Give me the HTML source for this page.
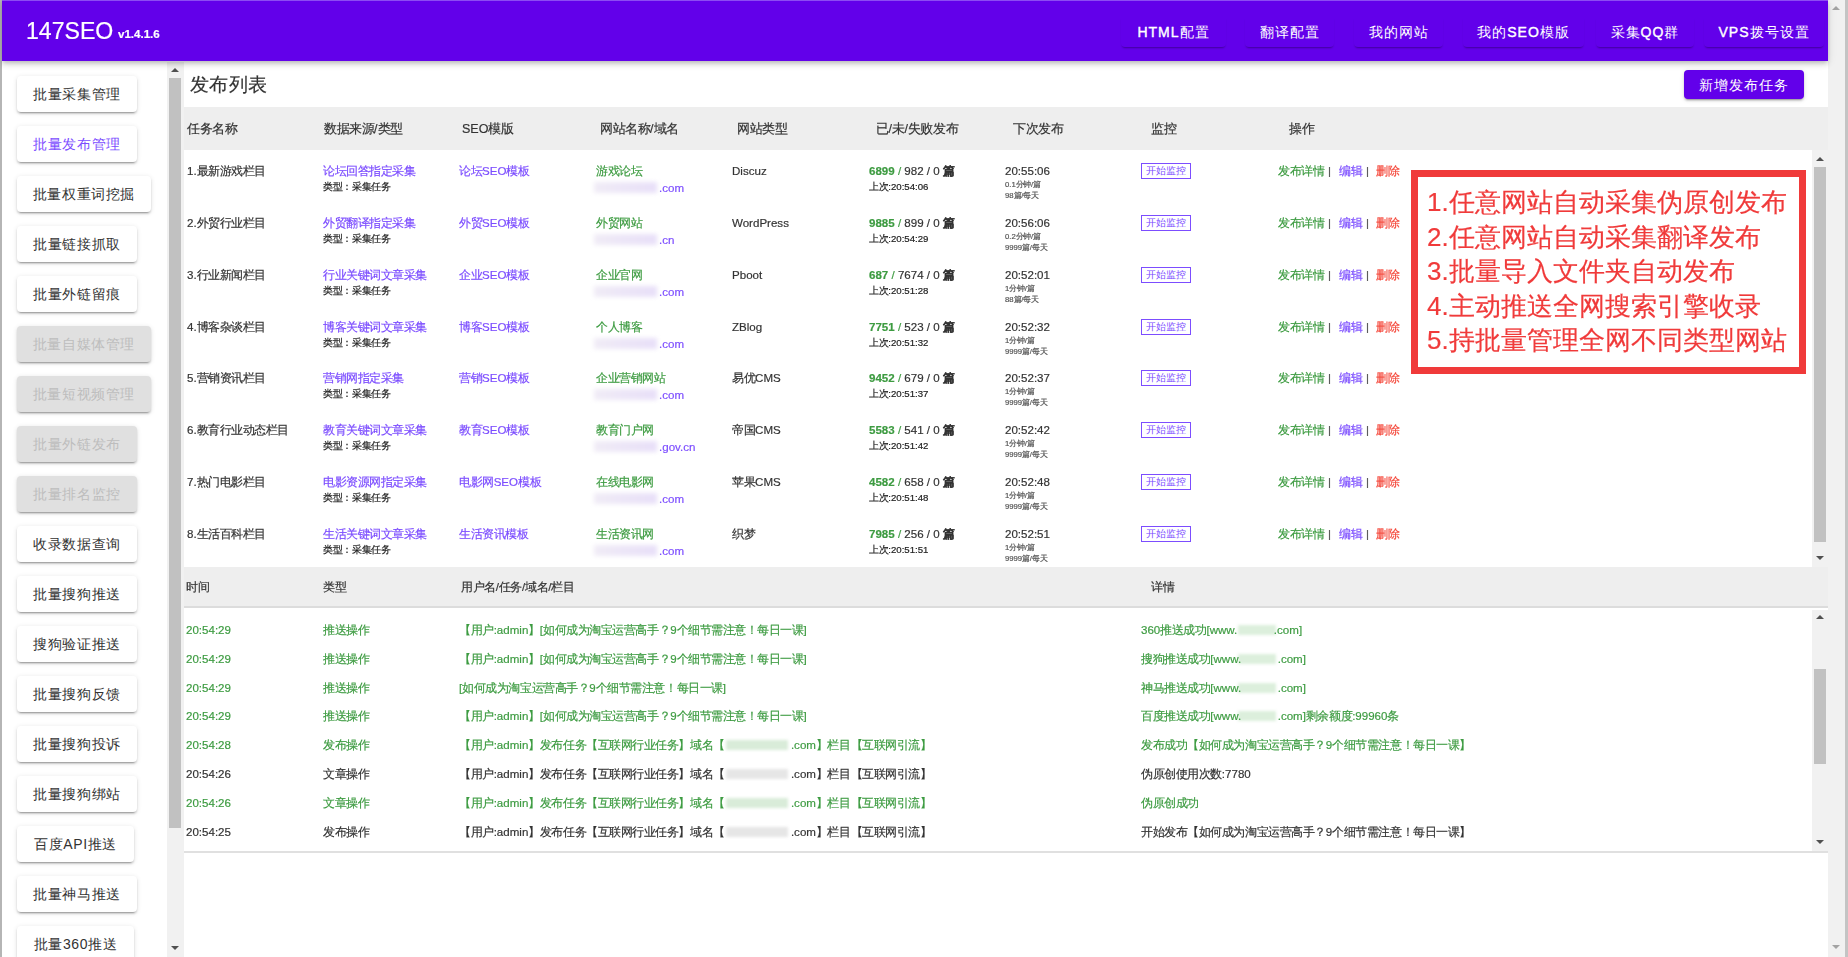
<!DOCTYPE html><html><head><meta charset="utf-8"><title>147SEO</title><style>
*{box-sizing:border-box;margin:0;padding:0}
html,body{width:1848px;height:957px;overflow:hidden;background:#fff;font-family:"Liberation Sans",sans-serif;color:#333}
.abs{position:absolute}
.t{position:absolute;white-space:nowrap;line-height:1;transform:scale(.9625);transform-origin:0 0;-webkit-text-stroke:0.2px currentColor}
.hdr{position:absolute;left:2px;top:0;width:1826px;height:61px;background:#6200ea;box-shadow:0 2px 4px -1px rgba(0,0,0,.16),0 4px 5px 0 rgba(0,0,0,.11),0 1px 10px 0 rgba(0,0,0,.09);z-index:5}
.nb b{font-weight:normal;-webkit-text-stroke:0.4px #fff}
.nb{position:absolute;top:16px;height:31px;border-radius:4px;box-shadow:0 2px 2px -1px rgba(0,0,0,.35);color:#fff;font-size:14px;font-weight:500;letter-spacing:1px;text-align:center;line-height:32px}
.sb{position:absolute;left:17px;height:36px;width:120px;background:#fff;border-radius:4px;box-shadow:0 3px 1px -2px rgba(0,0,0,.2),0 2px 2px 0 rgba(0,0,0,.14),0 1px 5px 0 rgba(0,0,0,.12);font-size:14px;color:#333;text-align:center;line-height:36px;letter-spacing:0.6px;font-weight:500}
.sb.dis{background:#e0e0e0;color:#bdbdbd;box-shadow:0 3px 1px -2px rgba(0,0,0,.2),0 2px 2px 0 rgba(0,0,0,.14),0 1px 5px 0 rgba(0,0,0,.12)}
.track{position:absolute;background:#f1f1f1}
.thumb{position:absolute;background:#c1c1c1}
.aru{position:absolute;width:0;height:0;border-left:4px solid transparent;border-right:4px solid transparent;border-bottom:4px solid #505050}
.ard{position:absolute;width:0;height:0;border-left:4px solid transparent;border-right:4px solid transparent;border-top:4px solid #505050}
.c12{font-size:12px}
.lk{color:#7c4dff}
.gr{color:#3d9b41}
.rd{color:#f44336}
.blur{position:absolute;height:11px;background:linear-gradient(90deg,#f0ecf6,#e8dff8);filter:blur(2px)}
.gblur{position:absolute;height:12px;background:#e2f0e2;filter:blur(2px)}
</style></head><body>
<div class="abs" style="left:0;top:0;width:2px;height:957px;background:#b5b5b5"></div>
<div class="track" style="left:1828px;top:0;width:17px;height:957px"></div>
<div class="abs" style="left:1845px;top:0;width:3px;height:957px;background:#c4c4c4"></div>
<div class="aru" style="left:1832px;top:6px;border-bottom-color:#a3a3a3"></div>
<div class="ard" style="left:1832px;top:945px;border-top-color:#a3a3a3"></div>
<div class="hdr">
<div class="abs" style="left:0;top:0;width:1826px;height:1px;background:#8c4cf2"></div>
<div class="t" style="left:24px;top:20px;font-size:24px;color:#fff">147SEO</div>
<div class="t" style="left:116px;top:28px;font-size:12px;font-weight:bold;color:#fff">v1.4.1.6</div>
<div class="nb" style="left:1119px;width:105px"><b>HTML</b>配置</div>
<div class="nb" style="left:1243px;width:89px">翻译配置</div>
<div class="nb" style="left:1352px;width:89px">我的网站</div>
<div class="nb" style="left:1461px;width:121px">我的<b>SEO</b>模版</div>
<div class="nb" style="left:1594px;width:98px">采集<b>QQ</b>群</div>
<div class="nb" style="left:1702px;width:120px"><b>VPS</b>拨号设置</div>
</div>
<div class="sb" style="top:76px;width:120px">批量采集管理</div>
<div class="sb" style="top:126px;width:120px;color:#7c4dff">批量发布管理</div>
<div class="sb" style="top:176px;width:134px">批量权重词挖掘</div>
<div class="sb" style="top:226px;width:120px">批量链接抓取</div>
<div class="sb" style="top:276px;width:120px">批量外链留痕</div>
<div class="sb dis" style="top:326px;width:134px">批量自媒体管理</div>
<div class="sb dis" style="top:376px;width:134px">批量短视频管理</div>
<div class="sb dis" style="top:426px;width:120px">批量外链发布</div>
<div class="sb dis" style="top:476px;width:120px">批量排名监控</div>
<div class="sb" style="top:526px;width:120px">收录数据查询</div>
<div class="sb" style="top:576px;width:120px">批量搜狗推送</div>
<div class="sb" style="top:626px;width:120px">搜狗验证推送</div>
<div class="sb" style="top:676px;width:120px">批量搜狗反馈</div>
<div class="sb" style="top:726px;width:120px">批量搜狗投诉</div>
<div class="sb" style="top:776px;width:120px">批量搜狗绑站</div>
<div class="sb" style="top:826px;width:117px">百度API推送</div>
<div class="sb" style="top:876px;width:120px">批量神马推送</div>
<div class="sb" style="top:926px;width:117px">批量360推送</div>
<div class="track" style="left:167px;top:62px;width:17px;height:895px"></div>
<div class="thumb" style="left:169px;top:78px;width:12px;height:750px"></div>
<div class="aru" style="left:171px;top:68px"></div>
<div class="ard" style="left:171px;top:946px"></div>
<div class="t" style="left:190px;top:75px;font-size:20px;color:#333">发布列表</div>
<div class="abs" style="left:1684px;top:70px;width:120px;height:29px;background:#6200ea;border-radius:4px;box-shadow:0 3px 1px -2px rgba(0,0,0,.2),0 2px 2px 0 rgba(0,0,0,.14),0 1px 5px 0 rgba(0,0,0,.12);color:#fff;font-size:14px;font-weight:500;text-align:center;line-height:31px;letter-spacing:1px">新增发布任务</div>
<div class="abs" style="left:184px;top:107px;width:1644px;height:43px;background:#eeeeee"></div>
<div class="t" style="left:187px;top:122px;font-size:13px;color:#333">任务名称</div>
<div class="t" style="left:324px;top:122px;font-size:13px;color:#333">数据来源/类型</div>
<div class="t" style="left:462px;top:122px;font-size:13px;color:#333">SEO模版</div>
<div class="t" style="left:600px;top:122px;font-size:13px;color:#333">网站名称/域名</div>
<div class="t" style="left:737px;top:122px;font-size:13px;color:#333">网站类型</div>
<div class="t" style="left:876px;top:122px;font-size:13px;color:#333">已/未/失败发布</div>
<div class="t" style="left:1013px;top:122px;font-size:13px;color:#333">下次发布</div>
<div class="t" style="left:1151px;top:122px;font-size:13px;color:#333">监控</div>
<div class="t" style="left:1289px;top:122px;font-size:13px;color:#333">操作</div>
<div class="t c12" style="left:187px;top:165px">1.最新游戏栏目</div>
<div class="t c12 lk" style="left:323px;top:165px">论坛回答指定采集</div>
<div class="t" style="left:323px;top:182px;font-size:10px;color:#222">类型：采集任务</div>
<div class="t c12 lk" style="left:459px;top:165px">论坛SEO模板</div>
<div class="t c12 gr" style="left:596px;top:165px">游戏论坛</div>
<div class="blur" style="left:594px;top:182px;width:63px"></div>
<div class="t c12 lk" style="left:659px;top:182px">.com</div>
<div class="t c12" style="left:732px;top:165px">Discuz</div>
<div class="t c12" style="left:869px;top:165px"><b class="gr">6899</b><span class="gr"> /</span> 982 / 0 <b>篇</b></div>
<div class="t" style="left:869px;top:182px;font-size:10px;color:#222">上次:20:54:06</div>
<div class="t c12" style="left:1005px;top:165px">20:55:06</div>
<div class="t" style="left:1005px;top:181px;font-size:8px;color:#555">0.1分钟/篇</div>
<div class="t" style="left:1005px;top:192px;font-size:8px;color:#555">98篇/每天</div>
<div class="abs" style="left:1141px;top:163px;width:50px;height:16px;border:1px solid #7c4dff;font-size:10px;color:#7c4dff;text-align:center;line-height:14px">开始监控</div>
<div class="t c12 gr" style="left:1278px;top:165px">发布详情</div>
<div class="t c12" style="left:1328px;top:165px;color:#555">|</div>
<div class="t c12 lk" style="left:1338.5px;top:165px">编辑</div>
<div class="t c12" style="left:1365.5px;top:165px;color:#555">|</div>
<div class="t c12 rd" style="left:1375.5px;top:165px">删除</div>
<div class="t c12" style="left:187px;top:217px">2.外贸行业栏目</div>
<div class="t c12 lk" style="left:323px;top:217px">外贸翻译指定采集</div>
<div class="t" style="left:323px;top:234px;font-size:10px;color:#222">类型：采集任务</div>
<div class="t c12 lk" style="left:459px;top:217px">外贸SEO模板</div>
<div class="t c12 gr" style="left:596px;top:217px">外贸网站</div>
<div class="blur" style="left:594px;top:234px;width:63px"></div>
<div class="t c12 lk" style="left:659px;top:234px">.cn</div>
<div class="t c12" style="left:732px;top:217px">WordPress</div>
<div class="t c12" style="left:869px;top:217px"><b class="gr">9885</b><span class="gr"> /</span> 899 / 0 <b>篇</b></div>
<div class="t" style="left:869px;top:234px;font-size:10px;color:#222">上次:20:54:29</div>
<div class="t c12" style="left:1005px;top:217px">20:56:06</div>
<div class="t" style="left:1005px;top:233px;font-size:8px;color:#555">0.2分钟/篇</div>
<div class="t" style="left:1005px;top:244px;font-size:8px;color:#555">9999篇/每天</div>
<div class="abs" style="left:1141px;top:215px;width:50px;height:16px;border:1px solid #7c4dff;font-size:10px;color:#7c4dff;text-align:center;line-height:14px">开始监控</div>
<div class="t c12 gr" style="left:1278px;top:217px">发布详情</div>
<div class="t c12" style="left:1328px;top:217px;color:#555">|</div>
<div class="t c12 lk" style="left:1338.5px;top:217px">编辑</div>
<div class="t c12" style="left:1365.5px;top:217px;color:#555">|</div>
<div class="t c12 rd" style="left:1375.5px;top:217px">删除</div>
<div class="t c12" style="left:187px;top:269px">3.行业新闻栏目</div>
<div class="t c12 lk" style="left:323px;top:269px">行业关键词文章采集</div>
<div class="t" style="left:323px;top:286px;font-size:10px;color:#222">类型：采集任务</div>
<div class="t c12 lk" style="left:459px;top:269px">企业SEO模板</div>
<div class="t c12 gr" style="left:596px;top:269px">企业官网</div>
<div class="blur" style="left:594px;top:286px;width:63px"></div>
<div class="t c12 lk" style="left:659px;top:286px">.com</div>
<div class="t c12" style="left:732px;top:269px">Pboot</div>
<div class="t c12" style="left:869px;top:269px"><b class="gr">687</b><span class="gr"> /</span> 7674 / 0 <b>篇</b></div>
<div class="t" style="left:869px;top:286px;font-size:10px;color:#222">上次:20:51:28</div>
<div class="t c12" style="left:1005px;top:269px">20:52:01</div>
<div class="t" style="left:1005px;top:285px;font-size:8px;color:#555">1分钟/篇</div>
<div class="t" style="left:1005px;top:296px;font-size:8px;color:#555">88篇/每天</div>
<div class="abs" style="left:1141px;top:267px;width:50px;height:16px;border:1px solid #7c4dff;font-size:10px;color:#7c4dff;text-align:center;line-height:14px">开始监控</div>
<div class="t c12 gr" style="left:1278px;top:269px">发布详情</div>
<div class="t c12" style="left:1328px;top:269px;color:#555">|</div>
<div class="t c12 lk" style="left:1338.5px;top:269px">编辑</div>
<div class="t c12" style="left:1365.5px;top:269px;color:#555">|</div>
<div class="t c12 rd" style="left:1375.5px;top:269px">删除</div>
<div class="t c12" style="left:187px;top:321px">4.博客杂谈栏目</div>
<div class="t c12 lk" style="left:323px;top:321px">博客关键词文章采集</div>
<div class="t" style="left:323px;top:338px;font-size:10px;color:#222">类型：采集任务</div>
<div class="t c12 lk" style="left:459px;top:321px">博客SEO模板</div>
<div class="t c12 gr" style="left:596px;top:321px">个人博客</div>
<div class="blur" style="left:594px;top:338px;width:63px"></div>
<div class="t c12 lk" style="left:659px;top:338px">.com</div>
<div class="t c12" style="left:732px;top:321px">ZBlog</div>
<div class="t c12" style="left:869px;top:321px"><b class="gr">7751</b><span class="gr"> /</span> 523 / 0 <b>篇</b></div>
<div class="t" style="left:869px;top:338px;font-size:10px;color:#222">上次:20:51:32</div>
<div class="t c12" style="left:1005px;top:321px">20:52:32</div>
<div class="t" style="left:1005px;top:337px;font-size:8px;color:#555">1分钟/篇</div>
<div class="t" style="left:1005px;top:348px;font-size:8px;color:#555">9999篇/每天</div>
<div class="abs" style="left:1141px;top:319px;width:50px;height:16px;border:1px solid #7c4dff;font-size:10px;color:#7c4dff;text-align:center;line-height:14px">开始监控</div>
<div class="t c12 gr" style="left:1278px;top:321px">发布详情</div>
<div class="t c12" style="left:1328px;top:321px;color:#555">|</div>
<div class="t c12 lk" style="left:1338.5px;top:321px">编辑</div>
<div class="t c12" style="left:1365.5px;top:321px;color:#555">|</div>
<div class="t c12 rd" style="left:1375.5px;top:321px">删除</div>
<div class="t c12" style="left:187px;top:372px">5.营销资讯栏目</div>
<div class="t c12 lk" style="left:323px;top:372px">营销网指定采集</div>
<div class="t" style="left:323px;top:389px;font-size:10px;color:#222">类型：采集任务</div>
<div class="t c12 lk" style="left:459px;top:372px">营销SEO模板</div>
<div class="t c12 gr" style="left:596px;top:372px">企业营销网站</div>
<div class="blur" style="left:594px;top:389px;width:63px"></div>
<div class="t c12 lk" style="left:659px;top:389px">.com</div>
<div class="t c12" style="left:732px;top:372px">易优CMS</div>
<div class="t c12" style="left:869px;top:372px"><b class="gr">9452</b><span class="gr"> /</span> 679 / 0 <b>篇</b></div>
<div class="t" style="left:869px;top:389px;font-size:10px;color:#222">上次:20:51:37</div>
<div class="t c12" style="left:1005px;top:372px">20:52:37</div>
<div class="t" style="left:1005px;top:388px;font-size:8px;color:#555">1分钟/篇</div>
<div class="t" style="left:1005px;top:399px;font-size:8px;color:#555">9999篇/每天</div>
<div class="abs" style="left:1141px;top:370px;width:50px;height:16px;border:1px solid #7c4dff;font-size:10px;color:#7c4dff;text-align:center;line-height:14px">开始监控</div>
<div class="t c12 gr" style="left:1278px;top:372px">发布详情</div>
<div class="t c12" style="left:1328px;top:372px;color:#555">|</div>
<div class="t c12 lk" style="left:1338.5px;top:372px">编辑</div>
<div class="t c12" style="left:1365.5px;top:372px;color:#555">|</div>
<div class="t c12 rd" style="left:1375.5px;top:372px">删除</div>
<div class="t c12" style="left:187px;top:424px">6.教育行业动态栏目</div>
<div class="t c12 lk" style="left:323px;top:424px">教育关键词文章采集</div>
<div class="t" style="left:323px;top:441px;font-size:10px;color:#222">类型：采集任务</div>
<div class="t c12 lk" style="left:459px;top:424px">教育SEO模板</div>
<div class="t c12 gr" style="left:596px;top:424px">教育门户网</div>
<div class="blur" style="left:594px;top:441px;width:63px"></div>
<div class="t c12 lk" style="left:659px;top:441px">.gov.cn</div>
<div class="t c12" style="left:732px;top:424px">帝国CMS</div>
<div class="t c12" style="left:869px;top:424px"><b class="gr">5583</b><span class="gr"> /</span> 541 / 0 <b>篇</b></div>
<div class="t" style="left:869px;top:441px;font-size:10px;color:#222">上次:20:51:42</div>
<div class="t c12" style="left:1005px;top:424px">20:52:42</div>
<div class="t" style="left:1005px;top:440px;font-size:8px;color:#555">1分钟/篇</div>
<div class="t" style="left:1005px;top:451px;font-size:8px;color:#555">9999篇/每天</div>
<div class="abs" style="left:1141px;top:422px;width:50px;height:16px;border:1px solid #7c4dff;font-size:10px;color:#7c4dff;text-align:center;line-height:14px">开始监控</div>
<div class="t c12 gr" style="left:1278px;top:424px">发布详情</div>
<div class="t c12" style="left:1328px;top:424px;color:#555">|</div>
<div class="t c12 lk" style="left:1338.5px;top:424px">编辑</div>
<div class="t c12" style="left:1365.5px;top:424px;color:#555">|</div>
<div class="t c12 rd" style="left:1375.5px;top:424px">删除</div>
<div class="t c12" style="left:187px;top:476px">7.热门电影栏目</div>
<div class="t c12 lk" style="left:323px;top:476px">电影资源网指定采集</div>
<div class="t" style="left:323px;top:493px;font-size:10px;color:#222">类型：采集任务</div>
<div class="t c12 lk" style="left:459px;top:476px">电影网SEO模板</div>
<div class="t c12 gr" style="left:596px;top:476px">在线电影网</div>
<div class="blur" style="left:594px;top:493px;width:63px"></div>
<div class="t c12 lk" style="left:659px;top:493px">.com</div>
<div class="t c12" style="left:732px;top:476px">苹果CMS</div>
<div class="t c12" style="left:869px;top:476px"><b class="gr">4582</b><span class="gr"> /</span> 658 / 0 <b>篇</b></div>
<div class="t" style="left:869px;top:493px;font-size:10px;color:#222">上次:20:51:48</div>
<div class="t c12" style="left:1005px;top:476px">20:52:48</div>
<div class="t" style="left:1005px;top:492px;font-size:8px;color:#555">1分钟/篇</div>
<div class="t" style="left:1005px;top:503px;font-size:8px;color:#555">9999篇/每天</div>
<div class="abs" style="left:1141px;top:474px;width:50px;height:16px;border:1px solid #7c4dff;font-size:10px;color:#7c4dff;text-align:center;line-height:14px">开始监控</div>
<div class="t c12 gr" style="left:1278px;top:476px">发布详情</div>
<div class="t c12" style="left:1328px;top:476px;color:#555">|</div>
<div class="t c12 lk" style="left:1338.5px;top:476px">编辑</div>
<div class="t c12" style="left:1365.5px;top:476px;color:#555">|</div>
<div class="t c12 rd" style="left:1375.5px;top:476px">删除</div>
<div class="t c12" style="left:187px;top:528px">8.生活百科栏目</div>
<div class="t c12 lk" style="left:323px;top:528px">生活关键词文章采集</div>
<div class="t" style="left:323px;top:545px;font-size:10px;color:#222">类型：采集任务</div>
<div class="t c12 lk" style="left:459px;top:528px">生活资讯模板</div>
<div class="t c12 gr" style="left:596px;top:528px">生活资讯网</div>
<div class="blur" style="left:594px;top:545px;width:63px"></div>
<div class="t c12 lk" style="left:659px;top:545px">.com</div>
<div class="t c12" style="left:732px;top:528px">织梦</div>
<div class="t c12" style="left:869px;top:528px"><b class="gr">7985</b><span class="gr"> /</span> 256 / 0 <b>篇</b></div>
<div class="t" style="left:869px;top:545px;font-size:10px;color:#222">上次:20:51:51</div>
<div class="t c12" style="left:1005px;top:528px">20:52:51</div>
<div class="t" style="left:1005px;top:544px;font-size:8px;color:#555">1分钟/篇</div>
<div class="t" style="left:1005px;top:555px;font-size:8px;color:#555">9999篇/每天</div>
<div class="abs" style="left:1141px;top:526px;width:50px;height:16px;border:1px solid #7c4dff;font-size:10px;color:#7c4dff;text-align:center;line-height:14px">开始监控</div>
<div class="t c12 gr" style="left:1278px;top:528px">发布详情</div>
<div class="t c12" style="left:1328px;top:528px;color:#555">|</div>
<div class="t c12 lk" style="left:1338.5px;top:528px">编辑</div>
<div class="t c12" style="left:1365.5px;top:528px;color:#555">|</div>
<div class="t c12 rd" style="left:1375.5px;top:528px">删除</div>
<div class="track" style="left:1812px;top:150px;width:16px;height:417px"></div>
<div class="thumb" style="left:1814px;top:167px;width:12px;height:375px"></div>
<div class="aru" style="left:1816px;top:157px"></div>
<div class="ard" style="left:1816px;top:556px"></div>
<div class="abs" style="left:1411px;top:170px;width:395px;height:204px;border:7px solid #f03a3a;background:#fff"></div>
<div class="t" style="left:1427px;top:190.0px;font-size:27px;font-weight:500;color:#f03a3a">1.任意网站自动采集伪原创发布</div>
<div class="t" style="left:1427px;top:224.6px;font-size:27px;font-weight:500;color:#f03a3a">2.任意网站自动采集翻译发布</div>
<div class="t" style="left:1427px;top:259.1px;font-size:27px;font-weight:500;color:#f03a3a">3.批量导入文件夹自动发布</div>
<div class="t" style="left:1427px;top:293.6px;font-size:27px;font-weight:500;color:#f03a3a">4.主动推送全网搜索引擎收录</div>
<div class="t" style="left:1427px;top:328.2px;font-size:27px;font-weight:500;color:#f03a3a">5.持批量管理全网不同类型网站</div>
<div class="abs" style="left:184px;top:567px;width:1644px;height:41px;background:#eeeeee;border-bottom:2px solid #dcdcdc"></div>
<div class="t c12" style="left:186px;top:581px">时间</div>
<div class="t c12" style="left:323px;top:581px">类型</div>
<div class="t c12" style="left:461px;top:581px">用户名/任务/域名/栏目</div>
<div class="t c12" style="left:1151px;top:581px">详情</div>
<div class="t c12" style="left:186px;top:624px;color:#3d9b41">20:54:29</div>
<div class="t c12" style="left:323px;top:624px;color:#3d9b41">推送操作</div>
<div class="t c12" style="left:459px;top:624px;color:#3d9b41">【用户:admin】[如何成为淘宝运营高手？9个细节需注意！每日一课]</div>
<div class="abs" style="left:1238px;top:625px;width:38px;height:10px;background:#dcefdc;filter:blur(1.5px)"></div>
<div class="t c12" style="left:1141px;top:624px;color:#3d9b41">360推送成功[www.<span style="display:inline-block;width:38px"></span>.com]</div>
<div class="t c12" style="left:186px;top:653px;color:#3d9b41">20:54:29</div>
<div class="t c12" style="left:323px;top:653px;color:#3d9b41">推送操作</div>
<div class="t c12" style="left:459px;top:653px;color:#3d9b41">【用户:admin】[如何成为淘宝运营高手？9个细节需注意！每日一课]</div>
<div class="abs" style="left:1238px;top:654px;width:38px;height:10px;background:#dcefdc;filter:blur(1.5px)"></div>
<div class="t c12" style="left:1141px;top:653px;color:#3d9b41">搜狗推送成功[www.<span style="display:inline-block;width:38px"></span>.com]</div>
<div class="t c12" style="left:186px;top:682px;color:#3d9b41">20:54:29</div>
<div class="t c12" style="left:323px;top:682px;color:#3d9b41">推送操作</div>
<div class="t c12" style="left:459px;top:682px;color:#3d9b41">[如何成为淘宝运营高手？9个细节需注意！每日一课]</div>
<div class="abs" style="left:1238px;top:683px;width:38px;height:10px;background:#dcefdc;filter:blur(1.5px)"></div>
<div class="t c12" style="left:1141px;top:682px;color:#3d9b41">神马推送成功[www.<span style="display:inline-block;width:38px"></span>.com]</div>
<div class="t c12" style="left:186px;top:710px;color:#3d9b41">20:54:29</div>
<div class="t c12" style="left:323px;top:710px;color:#3d9b41">推送操作</div>
<div class="t c12" style="left:459px;top:710px;color:#3d9b41">【用户:admin】[如何成为淘宝运营高手？9个细节需注意！每日一课]</div>
<div class="abs" style="left:1238px;top:711px;width:38px;height:10px;background:#dcefdc;filter:blur(1.5px)"></div>
<div class="t c12" style="left:1141px;top:710px;color:#3d9b41">百度推送成功[www.<span style="display:inline-block;width:38px"></span>.com]剩余额度:99960条</div>
<div class="t c12" style="left:186px;top:739px;color:#3d9b41">20:54:28</div>
<div class="t c12" style="left:323px;top:739px;color:#3d9b41">发布操作</div>
<div class="abs" style="left:726px;top:740px;width:62px;height:10px;background:#d9ecd9;filter:blur(1.5px)"></div>
<div class="t c12" style="left:459px;top:739px;color:#3d9b41">【用户:admin】发布任务【互联网行业任务】域名【<span style="display:inline-block;width:68.8px"></span>.com】栏目【互联网引流】</div>
<div class="t c12" style="left:1141px;top:739px;color:#3d9b41">发布成功【如何成为淘宝运营高手？9个细节需注意！每日一课】</div>
<div class="t c12" style="left:186px;top:768px;color:#333">20:54:26</div>
<div class="t c12" style="left:323px;top:768px;color:#333">文章操作</div>
<div class="abs" style="left:726px;top:769px;width:62px;height:10px;background:#e6e6e6;filter:blur(1.5px)"></div>
<div class="t c12" style="left:459px;top:768px;color:#333">【用户:admin】发布任务【互联网行业任务】域名【<span style="display:inline-block;width:68.8px"></span>.com】栏目【互联网引流】</div>
<div class="t c12" style="left:1141px;top:768px;color:#333">伪原创使用次数:7780</div>
<div class="t c12" style="left:186px;top:797px;color:#3d9b41">20:54:26</div>
<div class="t c12" style="left:323px;top:797px;color:#3d9b41">文章操作</div>
<div class="abs" style="left:726px;top:798px;width:62px;height:10px;background:#d9ecd9;filter:blur(1.5px)"></div>
<div class="t c12" style="left:459px;top:797px;color:#3d9b41">【用户:admin】发布任务【互联网行业任务】域名【<span style="display:inline-block;width:68.8px"></span>.com】栏目【互联网引流】</div>
<div class="t c12" style="left:1141px;top:797px;color:#3d9b41">伪原创成功</div>
<div class="t c12" style="left:186px;top:826px;color:#333">20:54:25</div>
<div class="t c12" style="left:323px;top:826px;color:#333">发布操作</div>
<div class="abs" style="left:726px;top:827px;width:62px;height:10px;background:#e6e6e6;filter:blur(1.5px)"></div>
<div class="t c12" style="left:459px;top:826px;color:#333">【用户:admin】发布任务【互联网行业任务】域名【<span style="display:inline-block;width:68.8px"></span>.com】栏目【互联网引流】</div>
<div class="t c12" style="left:1141px;top:826px;color:#333">开始发布【如何成为淘宝运营高手？9个细节需注意！每日一课】</div>
<div class="track" style="left:1812px;top:610px;width:16px;height:242px"></div>
<div class="thumb" style="left:1814px;top:669px;width:12px;height:95px"></div>
<div class="aru" style="left:1816px;top:615px"></div>
<div class="ard" style="left:1816px;top:840px"></div>
<div class="abs" style="left:184px;top:851px;width:1644px;height:2px;background:#e0e0e0"></div>
</body></html>
